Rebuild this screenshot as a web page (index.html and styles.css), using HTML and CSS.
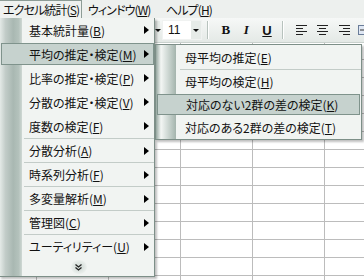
FILE: index.html
```
<!DOCTYPE html>
<html>

<head>
    <title>エクセル統計 メニュー</title>
    <link rel="stylesheet" href="styles.css">
</head>

<body>
<div class="app">
    <div class="menubar">
        <span class="mb-item open">エクセル統計(<u>S</u>)</span>
        <span class="mb-item w2">ウィンドウ(<u>W</u>)</span>
        <span class="mb-item">ヘルプ(<u>H</u>)</span>
    </div>

    <div class="toolbar">
        <span class="drop"><i class="down"></i></span>
        <span class="sizebox"><span class="val">11</span><span class="drop"><i class="down"></i></span></span>
        <span class="sep"></span>
        <span class="tb b">B</span>
        <span class="tb i">I</span>
        <span class="tb u">U</span>
        <span class="sep"></span>
        <span class="tb al">
            <svg width="11" height="10" viewBox="0 0 11 10"><path d="M0 .5h11M0 3.5h7M0 6.5h11M0 9.5h7" stroke="#222" stroke-width="1"/></svg>
        </span>
        <span class="tb al">
            <svg width="11" height="10" viewBox="0 0 11 10"><path d="M0 .5h11M2 3.5h7M0 6.5h11M2 9.5h7" stroke="#222" stroke-width="1"/></svg>
        </span>
        <span class="tb al">
            <svg width="11" height="10" viewBox="0 0 11 10"><path d="M0 .5h11M4 3.5h7M0 6.5h11M4 9.5h7" stroke="#222" stroke-width="1"/></svg>
        </span>
        <span class="tb al last">
            <svg width="6" height="10" viewBox="0 0 6 10"><rect x=".5" y=".5" width="6" height="9" fill="#dfe7f3" stroke="#6a7d99"/><path d="M2 5h4" stroke="#333"/></svg>
        </span>
    </div>

    <div class="sheet"></div>

    <!-- main drop-down -->
    <div class="menu main">
        <div class="item">基本統計量(<u>B</u>)<i class="arrow"></i></div>
        <div class="item hot">平均の推定・検定(<u>M</u>)<i class="arrow"></i></div>
        <div class="item">比率の推定・検定(<u>P</u>)<i class="arrow"></i></div>
        <div class="item">分散の推定・検定(<u>V</u>)<i class="arrow"></i></div>
        <div class="item">度数の検定(<u>F</u>)<i class="arrow"></i></div>
        <div class="item grp">分散分析(<u>A</u>)<i class="arrow"></i></div>
        <div class="item grp">時系列分析(<u>F</u>)<i class="arrow"></i></div>
        <div class="item grp">多変量解析(<u>M</u>)<i class="arrow"></i></div>
        <div class="item grp">管理図(<u>C</u>)<i class="arrow"></i></div>
        <div class="item grp">ユーティリティー(<u>U</u>)<i class="arrow"></i></div>
        <div class="more">
            <span class="chev">
                <svg width="7" height="7" viewBox="0 0 7 7"><path d="M.5 .5l3 2.5 3-2.5M.5 3.5l3 2.5 3-2.5" fill="none" stroke="#222" stroke-width="1.3"/></svg>
            </span>
        </div>
    </div>

    <!-- sub menu -->
    <div class="menu sub">
        <div class="item first">母平均の推定(<u>E</u>)</div>
        <div class="item grp">母平均の検定(<u>H</u>)</div>
        <div class="item hot">対応のない2群の差の検定(<u>K</u>)</div>
        <div class="item">対応のある2群の差の検定(<u>T</u>)</div>
    </div>
</div>
</body>

</html>
```

FILE: styles.css
```
/* Excel 2003 style menus */
body {
  margin: 0;
  font-family: "Noto Sans CJK JP", sans-serif;
  font-size: 12px;
  font-feature-settings: "palt";
  color: #111;
  background: #fff;
}

u {
  text-decoration: underline;
  text-underline-offset: 1px;
}

.app {
  position: relative;
  width: 364px;
  height: 280px;
  overflow: hidden;
}

/* menu bar */
.menubar {
  display: flex;
  height: 18px;
  background: #edf0ee;
  letter-spacing: -0.9px;
}

.mb-item {
  display: flex;
  align-items: center;
  padding: 0 6px;
  height: 18px;
  box-sizing: border-box;
  white-space: nowrap;
}

.mb-item.open {
  width: 82px;
  padding-left: 3px;
  background: #eef1ef;
  border: 1px solid #8d9c96;
  border-bottom: none;
  border-left: none;
}

.mb-item.w2 {
  width: 78px;
}

/* toolbar */
.toolbar {
  display: flex;
  align-items: center;
  height: 24px;
  padding-left: 155px;
  background: linear-gradient(#f6f8f7, #e4e9e6);
  border-bottom: 1px solid #c9d1cd;
}

.drop {
  display: flex;
  align-items: center;
  justify-content: center;
  width: 10px;
  height: 18px;
  background: #e6ebe8;
}

.toolbar > .drop {
  width: 5px;
}

.down {
  border-top: 3px solid #111;
  border-left: 3px solid transparent;
  border-right: 3px solid transparent;
}

.sizebox {
  display: flex;
  margin-left: 2px;
  width: 41px;
  height: 18px;
  background: #fff;
  border: 1px solid #f0f2f1;
}

.sizebox .val {
  flex: 1;
  padding-left: 5px;
  font-family: "Liberation Sans", sans-serif;
  line-height: 18px;
}

.sizebox .drop {
  margin-left: auto;
}

.sep {
  width: 1px;
  height: 18px;
  margin: 0 6px 0 5px;
  background: #b7c2bd;
  border-right: 1px solid #fff;
}

.tb {
  display: flex;
  align-items: center;
  justify-content: center;
  width: 22px;
  height: 18px;
  font-family: "Liberation Serif", serif;
  font-size: 13px;
  font-weight: bold;
}

.tb.i {
  font-style: italic;
}

.tb.u {
  text-decoration: underline;
  font-family: "Liberation Sans", sans-serif;
}

.tb.al {
  width: 23px;
}

.tb.last {
  width: 6px;
  margin-left: 3px;
  justify-content: flex-start;
}

/* sheet grid */
.sheet {
  height: 240px;
  background-color: #fff;
  background-image:
    linear-gradient(to right, #bcbcbc 1px, transparent 1px),
    linear-gradient(#bcbcbc 1px, transparent 1px);
  background-size: 72px 18px;
  background-position: 36px 0, 0 106px;
}

/* drop-down menus */
.menu {
  position: absolute;
  background-color: #f1f4f2;
  border: 1px solid #7d8f88;
  box-shadow: 2px 2px 2px rgba(0, 0, 0, 0.25);
}

.main {
  left: -1px;
  top: 18px;
  width: 154px;
  border-top: none;
  background-image: linear-gradient(to right, #e4eae7 0%, #c2ccc8 25%, #a9b8b2 60%, #b4c2bc 85%, #cfd8d4 100%);
  background-size: 22px 100%;
  background-repeat: no-repeat;
}

.sub {
  left: 155px;
  top: 44px;
  width: 205px;
  background-image: linear-gradient(to right, #96a7a0 0%, #f3f6f4 25%, #d3dcd8 55%, #a4b4ad 100%);
  background-size: 20px 100%;
  background-repeat: no-repeat;
}

.item {
  display: flex;
  align-items: center;
  height: 24px;
  padding-left: 29px;
  white-space: nowrap;
}

.main .item.grp {
  height: 23px;
  border-top: 1px solid #c3ccc8;
  margin-left: 24px;
  padding-left: 5px;
}

.arrow {
  margin-left: auto;
  margin-right: 5px;
  border-left: 5px solid #000;
  border-top: 4px solid transparent;
  border-bottom: 4px solid transparent;
}

.item.hot {
  height: 22px;
  margin: 1px 0 1px 1px;
  padding-left: 27px;
  background: #c6d2ce;
  border: 1px solid #7f938c;
  box-sizing: border-box;
}

.main .item.hot .arrow {
  margin-right: 4px;
}

.more {
  display: flex;
  justify-content: center;
  align-items: center;
  height: 18px;
  padding-left: 3px;
}

.chev {
  display: flex;
  align-items: center;
  justify-content: center;
  width: 16px;
  height: 14px;
  border-radius: 7px;
  background: radial-gradient(#d8e0dc 30%, #f1f4f2 80%);
}

.sub .item {
  height: 23px;
  padding-left: 29px;
}

.sub .item.first {
  height: 24px;
}

.sub .item.grp {
  border-top: 1px solid #c3ccc8;
  margin-left: 24px;
  padding-left: 5px;
}

.sub .item.hot {
  height: 21px;
  margin: 1px 1px 1px 1px;
  padding-left: 28px;
}
```
